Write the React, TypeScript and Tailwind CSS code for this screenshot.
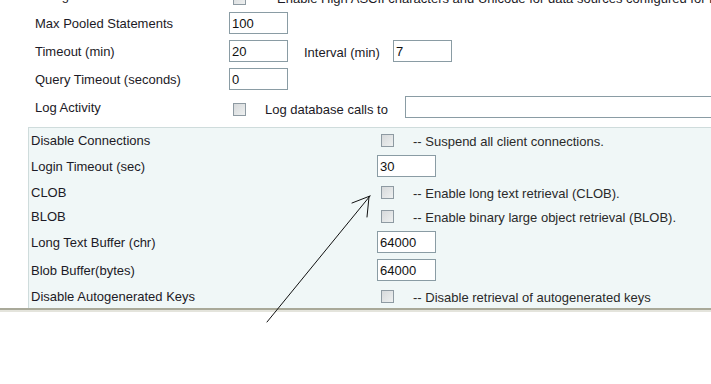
import React from "react";

function Box({ value, width = "w-[59px]" }: { value: string; width?: string }) {
  return (
    <div
      className={`${width} h-[22px] border border-[#8a9ca4] bg-white pl-[2px] flex items-center text-[13px] text-[#111]`}
    >
      <span className="mt-[1px]">{value}</span>
    </div>
  );
}

function Check() {
  return (
    <div className="w-[13px] h-[13px] border border-[#8e9aa2] bg-gradient-to-br from-[#d6d9db] to-[#eef0f0]" />
  );
}

function TopRow({ label, children }: { label: string; children?: React.ReactNode }) {
  return (
    <div className="flex items-center h-[28px]">
      <div className="w-[229px] pl-[35px] shrink-0 mt-[1px]">{label}</div>
      {children}
    </div>
  );
}

function PanelRow({
  label,
  h,
  children,
}: {
  label: string;
  h: "short" | "tall";
  children?: React.ReactNode;
}) {
  return (
    <div className={`flex items-center ${h === "tall" ? "h-[28px]" : "h-[24px]"}`}>
      <div className="w-[348px] pl-[2px] shrink-0 mt-[1px]">{label}</div>
      {children}
    </div>
  );
}

function CheckNote({ text }: { text: string }) {
  return (
    <div className="flex items-center">
      <div className="ml-[4px] mt-[1px]">
        <Check />
      </div>
      <span className="ml-[19px] mt-[3px] text-[#2a2a2a]">{text}</span>
    </div>
  );
}

export default function App() {
  return (
    <div
      className="relative w-[711px] h-[384px] overflow-hidden bg-white text-[13px] text-[#1c1a26]"
      style={{ fontFamily: '"Liberation Sans", Arial, sans-serif' }}
    >
      {/* General settings */}
      <div className="mt-[-19px]">
        <TopRow label="String Format">
          <div className="ml-[4px] mt-[6px] shrink-0">
            <Check />
          </div>
          <span className="ml-[31px] mt-[7px] whitespace-nowrap">
            Enable High ASCII characters and Unicode for data sources configured for r
          </span>
        </TopRow>
        <TopRow label="Max Pooled Statements">
          <Box value="100" />
        </TopRow>
        <TopRow label="Timeout (min)">
          <Box value="20" />
          <span className="ml-[16px] w-[89px] mt-[3px] shrink-0">Interval (min)</span>
          <Box value="7" />
        </TopRow>
        <TopRow label="Query Timeout (seconds)">
          <Box value="0" />
        </TopRow>
        <TopRow label="Log Activity">
          <div className="ml-[4px] mt-[5px] shrink-0">
            <Check />
          </div>
          <span className="ml-[19px] mt-[6px] w-[140px] shrink-0 whitespace-nowrap">
            Log database calls to
          </span>
          <Box value="" width="w-[330px] shrink-0" />
        </TopRow>
      </div>

      {/* Advanced settings panel */}
      <div className="mt-[6px] flex border-b-2 border-[#a9a999]">
        <div className="w-[28px] shrink-0" />
        <div className="flex-1 border-l border-t border-[#cfdcdc] bg-[#f0f7f7]">
          <PanelRow label="Disable Connections" h="short">
            <CheckNote text="-- Suspend all client connections." />
          </PanelRow>
          <PanelRow label="Login Timeout (sec)" h="tall">
            <Box value="30" />
          </PanelRow>
          <PanelRow label="CLOB" h="short">
            <CheckNote text="-- Enable long text retrieval (CLOB)." />
          </PanelRow>
          <PanelRow label="BLOB" h="short">
            <CheckNote text="-- Enable binary large object retrieval (BLOB)." />
          </PanelRow>
          <PanelRow label="Long Text Buffer (chr)" h="tall">
            <Box value="64000" />
          </PanelRow>
          <PanelRow label="Blob Buffer(bytes)" h="tall">
            <Box value="64000" />
          </PanelRow>
          <PanelRow label="Disable Autogenerated Keys" h="short">
            <CheckNote text="-- Disable retrieval of autogenerated keys" />
          </PanelRow>
        </div>
      </div>
      <div className="h-[2px] bg-[#e4e4dc]" />

      {/* Hand-drawn annotation arrow */}
      <svg className="absolute left-0 top-0" width="711" height="384" viewBox="0 0 711 384">
        <g stroke="#111" strokeWidth="1" fill="none" strokeLinecap="round">
          <path d="M267 322 L370 196" />
          <path d="M352 203 L370 196" />
          <path d="M367 217 L369 197" />
        </g>
      </svg>
    </div>
  );
}
